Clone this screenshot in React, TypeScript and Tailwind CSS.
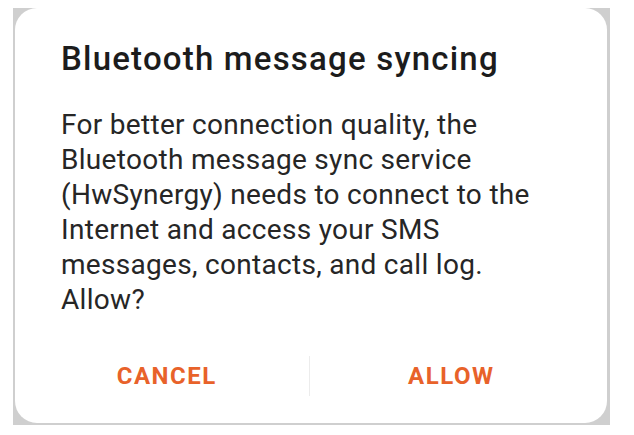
import * as React from "react";

export default function App() {
  return (
    <div className="w-[634px] h-[435px] bg-white overflow-hidden font-['Roboto',sans-serif]">
      <div className="ml-[13px] mt-[8px] w-[597px] h-[417px] bg-[#cfcfcf]">
        <div className="ml-[2px] mr-[3px] h-[415px] rounded-[22px] bg-white pt-[31px]">
          <h1 className="pl-[46px] text-[33px] leading-[40px] tracking-[1.2px] font-medium text-[#1c1c1c]">
            Bluetooth message syncing
          </h1>
          <p className="mt-[28px] pl-[46px] pr-[20px] text-[28px] leading-[35px] tracking-[0.3px] text-[#262626]">
            For better connection quality, the
            <br />
            Bluetooth message sync service
            <br />
            (HwSynergy) needs to connect to the
            <br />
            Internet and access your SMS
            <br />
            messages, contacts, and call log.
            <br />
            Allow?
          </p>
          <div className="mt-[39px] flex items-center h-[40px] pl-[10px] pr-[14px]">
            <button className="flex-1 text-[24px] leading-[28px] tracking-[1.5px] font-bold text-[#e8622a]">
              CANCEL
            </button>
            <div className="w-px h-[40px] bg-[#ececec]" />
            <button className="flex-1 text-[24px] leading-[28px] tracking-[1.5px] font-bold text-[#e8622a]">
              ALLOW
            </button>
          </div>
        </div>
      </div>
    </div>
  );
}
